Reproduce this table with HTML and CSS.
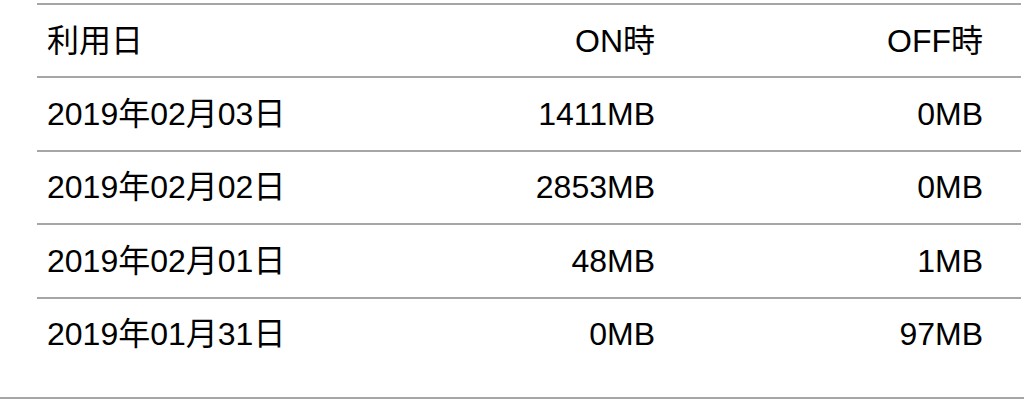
FILE: index.html
```html
<!DOCTYPE html>
<html lang="ja">
<head>
<meta charset="utf-8">
<link rel="stylesheet" href="styles.css">
</head>
<body>
<div class="wrap">
  <table class="usage">
    <thead>
      <tr><th class="date">利用日</th><th class="num">ON時</th><th class="num">OFF時</th></tr>
    </thead>
    <tbody>
      <tr><td class="date">2019年02月03日</td><td class="num">1411MB</td><td class="num">0MB</td></tr>
      <tr><td class="date">2019年02月02日</td><td class="num">2853MB</td><td class="num">0MB</td></tr>
      <tr><td class="date">2019年02月01日</td><td class="num">48MB</td><td class="num">1MB</td></tr>
      <tr class="last"><td class="date">2019年01月31日</td><td class="num">0MB</td><td class="num">97MB</td></tr>
    </tbody>
  </table>
</div>
<div class="end-rule"></div>
</body>
</html>
```

FILE: styles.css
```css
html, body {
  margin: 0;
  padding: 0;
  background: #ffffff;
}
body {
  width: 1024px;
  height: 400px;
  overflow: hidden;
  font-family: "Liberation Sans", Arial, "Noto Sans CJK JP", sans-serif;
  color: #000000;
}
.wrap {
  padding: 3px 3px 0 37px;
  height: 397px;
  box-sizing: border-box;
}
.usage {
  width: 984px;
  border-collapse: collapse;
  table-layout: fixed;
  border-top: 2px solid #a6a6a6;
}
.usage th,
.usage td {
  font-size: 32px;
  font-weight: normal;
  height: 71.4px;
  padding: 0;
  vertical-align: middle;
  border-bottom: 2px solid #a6a6a6;
  line-height: 1;
  white-space: nowrap;
}
.usage tr.last td {
  border-bottom: none;
}
.usage .date {
  text-align: left;
  padding-left: 10px;
}
.usage .num {
  text-align: right;
  padding-right: 38px;
}
.end-rule {
  height: 2px;
  background: #a6a6a6;
  width: 1024px;
}
```
